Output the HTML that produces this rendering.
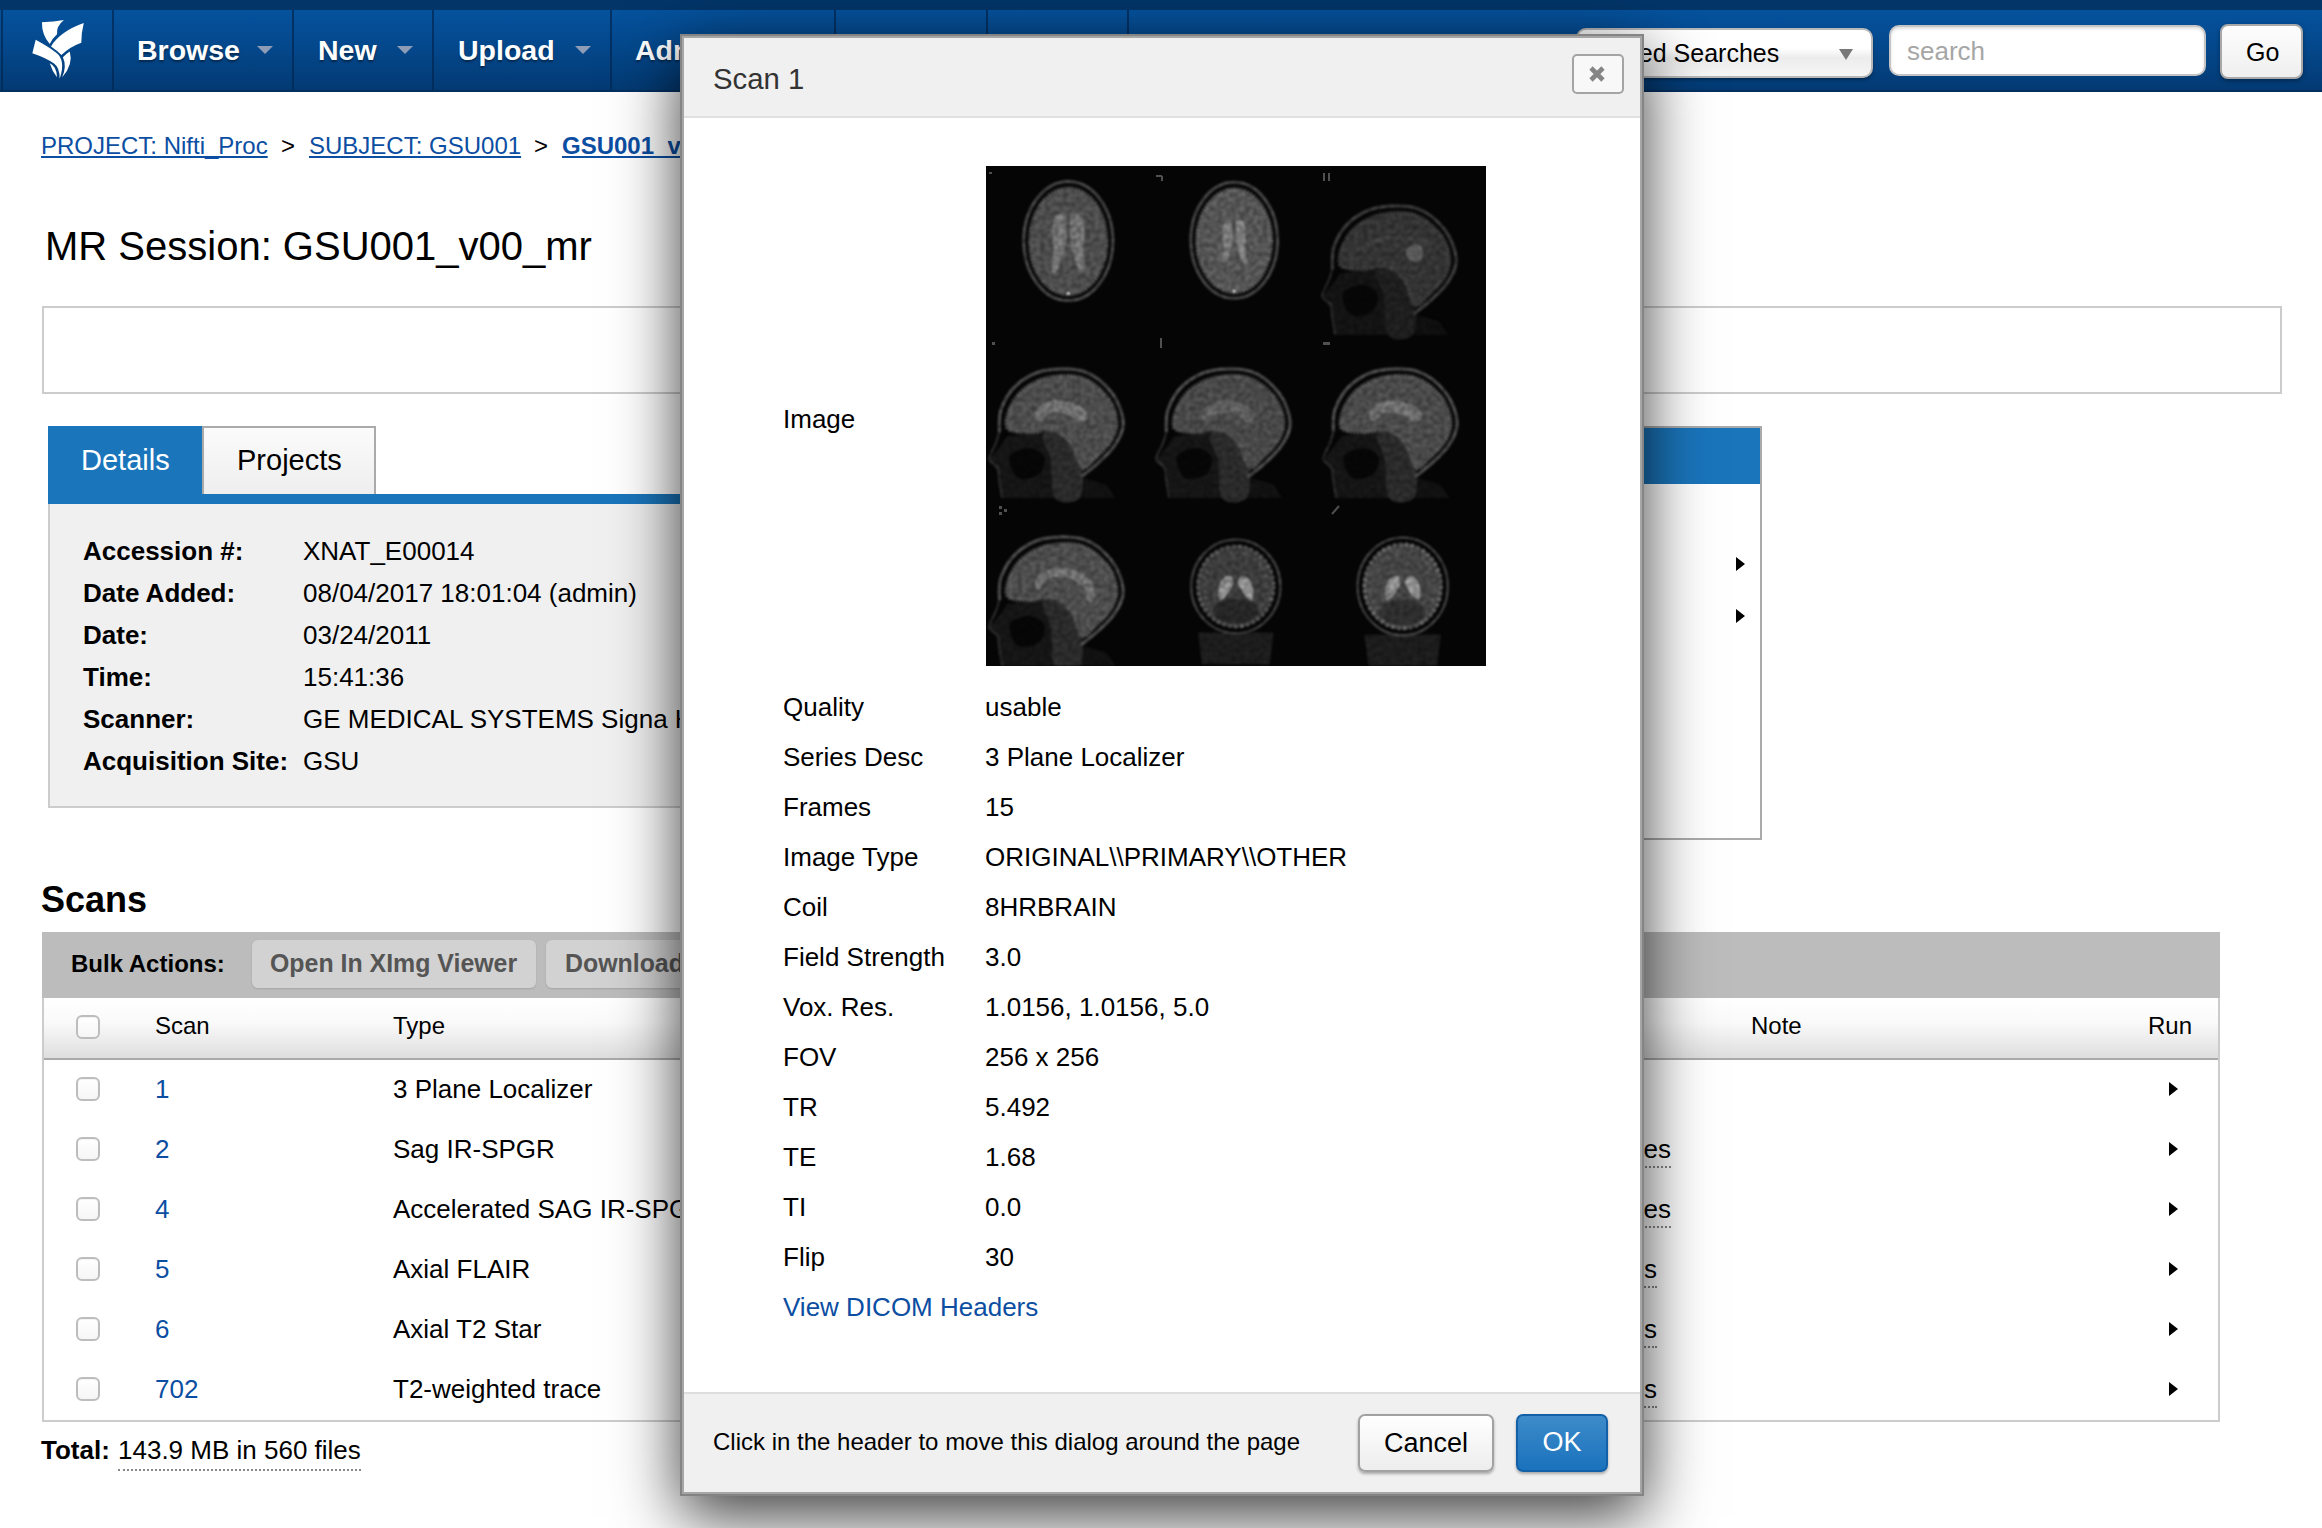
<!DOCTYPE html>
<html><head><meta charset="utf-8"><title>XNAT - MR Session</title>
<style>
*{box-sizing:border-box;margin:0;padding:0}
html,body{width:2322px;height:1528px;overflow:hidden;background:#fff}
body{font-family:"Liberation Sans",sans-serif;font-size:26px;color:#000;position:relative}
.a{position:absolute;white-space:nowrap}
.t{position:absolute;white-space:nowrap;line-height:40px;height:40px;margin-top:-20px}
.b{font-weight:bold}
.lk{color:#0b4ea2}
/* NAV */
#topband{left:0;top:0;width:2322px;height:10px;background:#033569}
#nav{left:0;top:10px;width:2322px;height:82px;background:linear-gradient(#05529d 0,#04488c 45%,#033a73 100%);border-bottom:2px solid #032f5f}
.dv{position:absolute;top:10px;width:2px;height:80px;background:rgba(2,40,84,.75)}
.nt{position:absolute;top:30px;height:40px;line-height:40px;color:#fff;font-weight:bold;font-size:28.5px;text-shadow:0 2px 2px rgba(0,0,0,.4);white-space:nowrap}
.na{position:absolute;top:46px;width:0;height:0;border-left:8px solid transparent;border-right:8px solid transparent;border-top:8px solid #8e9db5}
/* page */
.box{position:absolute;border:2px solid #ccc}
.cb{position:absolute;left:76px;width:24px;height:24px;border:2px solid #bdbdbd;border-radius:6px;background:linear-gradient(#fff,#f6f6f6);box-shadow:inset 0 1px 1px rgba(0,0,0,.05)}
.arr{position:absolute;width:0;height:0;border-top:7.5px solid transparent;border-bottom:7.5px solid transparent;border-left:9.5px solid #000;margin-top:1.5px}
.dot{border-bottom:2px dotted #888;padding-bottom:2px}
/* dialog */
#dlg{left:680px;top:34px;width:964px;height:1462px;background:#fff;border:2px solid #848484;box-shadow:inset 0 0 0 2px #a6a6a6,0 20px 60px rgba(0,0,0,.76)}
</style></head><body>
<!-- NAV -->
<div class="a" id="topband"></div>
<div class="a" id="nav"></div>

<div class="dv" style="left:1px"></div><div class="dv" style="left:112px"></div><div class="dv" style="left:292px"></div><div class="dv" style="left:432px"></div><div class="dv" style="left:610px"></div><div class="dv" style="left:834px"></div><div class="dv" style="left:986px"></div><div class="dv" style="left:1127px"></div>
<svg class="a" style="left:20px;top:12px" width="80" height="76" viewBox="0 0 1608 1528">
<g fill="#fff">
<path d="M440 205 Q680 205 882 163 Q725 290 745 447 Q655 525 598 642 Q440 470 440 205Z"/>
<path d="M1282 223 Q1232 420 1232 617 Q1000 700 832 864 Q740 770 623 692 Q810 390 1282 223Z"/>
<path d="M315 558 Q560 690 722 812 Q928 965 797 1342 Q800 1120 690 1040 Q540 930 248 830Z"/>
<path d="M1000 793 Q1078 1050 848 1314 Q945 1080 862 908 Q920 845 1000 793Z"/>
<path d="M598 1028 Q742 1090 744 1314 Q642 1180 598 1028Z"/>
</g></svg>
<div class="nt" style="left:137px">Browse</div><div class="na" style="left:257px"></div>
<div class="nt" style="left:318px">New</div><div class="na" style="left:397px"></div>
<div class="nt" style="left:458px">Upload</div><div class="na" style="left:575px"></div>
<div class="nt" style="left:635px">Administer</div>
<!-- search -->
<div class="a" style="left:1576px;top:28px;width:297px;height:50px;border:2px solid #b8b8b8;border-radius:10px;background:linear-gradient(#fff 0,#fff 40%,#ececec 60%,#f6f6f6 100%);box-shadow:0 2px 3px rgba(0,0,0,.3)"></div>
<div class="t" style="left:1593px;top:53px;font-size:25px">Stored Searches</div>
<div class="a" style="left:1839px;top:49px;width:0;height:0;border-left:7px solid transparent;border-right:7px solid transparent;border-top:11px solid #777"></div>
<div class="a" style="left:1889px;top:25px;width:317px;height:51px;border:2px solid #c4c4c4;border-radius:10px;background:#fff;box-shadow:inset 0 2px 3px rgba(0,0,0,.12)"></div>
<div class="t" style="left:1907px;top:51px;font-size:26px;color:#a6a6a6">search</div>
<div class="a" style="left:2220px;top:24px;width:83px;height:55px;border:2px solid #a8a8a8;border-radius:8px;background:linear-gradient(#fdfdfd,#efefef);box-shadow:0 2px 4px rgba(0,0,0,.35)"></div>
<div class="t" style="left:2246px;top:52px;font-size:25px">Go</div>


<!-- breadcrumb -->
<div class="t lk" style="left:41px;top:146px;font-size:24px;text-decoration:underline">PROJECT: Nifti_Proc</div>
<div class="t" style="left:281px;top:146px;font-size:24px">&gt;</div>
<div class="t lk" style="left:309px;top:146px;font-size:24px;text-decoration:underline">SUBJECT: GSU001</div>
<div class="t" style="left:534px;top:146px;font-size:24px">&gt;</div>
<div class="t lk b" style="left:562px;top:146px;font-size:24px;text-decoration:underline">GSU001_v00_mr</div>
<div class="t" style="left:45px;top:246px;font-size:40px;line-height:60px;height:60px;margin-top:-30px">MR Session: GSU001_v00_mr</div>
<div class="box" style="left:42px;top:306px;width:2240px;height:88px"></div>
<!-- tabs -->
<div class="a" style="left:48px;top:427px;width:1560px;height:77px;border-bottom:10px solid #1a75bb"></div>
<div class="a" style="left:48px;top:426px;width:154px;height:69px;background:#1a75bb"></div>
<div class="t" style="left:81px;top:460px;font-size:29px;color:#fff">Details</div>
<div class="a" style="left:202px;top:426px;width:174px;height:68px;border:2px solid #aaa;border-bottom:0;background:linear-gradient(#fbfbfb,#eee)"></div>
<div class="t" style="left:237px;top:460px;font-size:29px">Projects</div>
<div class="a" style="left:48px;top:504px;width:1560px;height:304px;background:#f0f0f0;border:2px solid #ccc;border-top:0"></div>
<div class="t b" style="left:83px;top:551px">Accession #:</div><div class="t" style="left:303px;top:551px">XNAT_E00014</div>
<div class="t b" style="left:83px;top:593px">Date Added:</div><div class="t" style="left:303px;top:593px">08/04/2017 18:01:04 (admin)</div>
<div class="t b" style="left:83px;top:635px">Date:</div><div class="t" style="left:303px;top:635px">03/24/2011</div>
<div class="t b" style="left:83px;top:677px">Time:</div><div class="t" style="left:303px;top:677px">15:41:36</div>
<div class="t b" style="left:83px;top:719px">Scanner:</div><div class="t" style="left:303px;top:719px">GE MEDICAL SYSTEMS Signa HDxt</div>
<div class="t b" style="left:83px;top:761px">Acquisition Site:</div><div class="t" style="left:303px;top:761px">GSU</div>
<!-- actions box -->
<div class="a" style="left:1402px;top:426px;width:360px;height:414px;border:2px solid #aaa;background:#fff"></div>
<div class="a" style="left:1404px;top:428px;width:356px;height:56px;background:#1a75bb"></div>
<div class="arr" style="left:1736px;top:555px"></div>
<div class="arr" style="left:1736px;top:607px"></div>
<!-- scans -->
<div class="t b" style="left:41px;top:900px;font-size:36px;line-height:50px;height:50px;margin-top:-25px">Scans</div>
<div class="a" style="left:42px;top:932px;width:2178px;height:66px;background:#bcbcbc"></div>
<div class="t b" style="left:71px;top:964px;font-size:24px">Bulk Actions:</div>
<div class="a" style="left:252px;top:940px;width:284px;height:48px;border-radius:6px;background:#d2d2d2;box-shadow:0 1px 2px rgba(0,0,0,.12)"></div>
<div class="t b" style="left:270px;top:963px;font-size:24.9px;color:#555">Open In XImg Viewer</div>
<div class="a" style="left:546px;top:940px;width:180px;height:48px;border-radius:6px;background:#d2d2d2;box-shadow:0 1px 2px rgba(0,0,0,.12)"></div>
<div class="t b" style="left:565px;top:963px;font-size:24.9px;color:#555">Download</div>
<div class="a" style="left:42px;top:998px;width:2178px;height:424px;border:2px solid #ccc;border-top:0;background:#fff"></div>
<div class="a" style="left:44px;top:998px;width:2174px;height:62px;background:linear-gradient(#fff 0,#fafafa 40%,#dedede 100%);border-bottom:2px solid #aaa"></div>
<div class="cb" style="top:1015px"></div>
<div class="t" style="left:155px;top:1026px;font-size:24px">Scan</div>
<div class="t" style="left:393px;top:1026px;font-size:24px">Type</div>
<div class="t" style="left:1751px;top:1026px;font-size:24px">Note</div>
<div class="t" style="left:2148px;top:1026px;font-size:24px">Run</div>
<div class="cb" style="top:1077px"></div><div class="t lk" style="left:155px;top:1089px">1</div><div class="t" style="left:393px;top:1089px">3 Plane Localizer</div><div class="arr" style="left:2169px;top:1080px"></div>
<div class="cb" style="top:1137px"></div><div class="t lk" style="left:155px;top:1149px">2</div><div class="t" style="left:393px;top:1149px">Sag IR-SPGR</div><div class="arr" style="left:2169px;top:1140px"></div>
<div class="t" style="left:1601px;top:1149px;width:70px;text-align:right"><span class="dot">files</span></div>
<div class="cb" style="top:1197px"></div><div class="t lk" style="left:155px;top:1209px">4</div><div class="t" style="left:393px;top:1209px">Accelerated SAG IR-SPGR</div><div class="arr" style="left:2169px;top:1200px"></div>
<div class="t" style="left:1601px;top:1209px;width:70px;text-align:right"><span class="dot">files</span></div>
<div class="cb" style="top:1257px"></div><div class="t lk" style="left:155px;top:1269px">5</div><div class="t" style="left:393px;top:1269px">Axial FLAIR</div><div class="arr" style="left:2169px;top:1260px"></div>
<div class="t" style="left:1601px;top:1269px;width:56px;text-align:right"><span class="dot">fils</span></div>
<div class="cb" style="top:1317px"></div><div class="t lk" style="left:155px;top:1329px">6</div><div class="t" style="left:393px;top:1329px">Axial T2 Star</div><div class="arr" style="left:2169px;top:1320px"></div>
<div class="t" style="left:1601px;top:1329px;width:56px;text-align:right"><span class="dot">fils</span></div>
<div class="cb" style="top:1377px"></div><div class="t lk" style="left:155px;top:1389px">702</div><div class="t" style="left:393px;top:1389px">T2-weighted trace</div><div class="arr" style="left:2169px;top:1380px"></div>
<div class="t" style="left:1601px;top:1389px;width:56px;text-align:right"><span class="dot">fils</span></div>
<div class="t b" style="left:41px;top:1450px">Total:</div><div class="t" style="left:118px;top:1450px"><span class="dot" style="padding-bottom:4px">143.9 MB in 560 files</span></div>


<div class="a" id="dlg"></div>
<div class="a" style="left:684px;top:38px;width:956px;height:80px;background:#f0f0f0;border-bottom:2px solid #e0e0e0"></div>
<div class="t" style="left:713px;top:79px;font-size:29.3px;color:#333">Scan 1</div>
<div class="a" style="left:1572px;top:54px;width:52px;height:40px;border:2px solid #a4a4a4;border-radius:5px;background:#f8f8f8"></div>
<svg class="a" style="left:1588px;top:65px" width="18" height="18" viewBox="0 0 18 18"><path d="M3 3 L15 15 M15 3 L3 15" stroke="#858585" stroke-width="4.6" fill="none"/></svg>
<div class="t" style="left:783px;top:419px">Image</div>
<!-- MRI-S --><svg class="a" style="left:986px;top:166px" width="500" height="500" viewBox="0 0 500 500">
<defs><filter id="bl" x="0" y="0" filterUnits="userSpaceOnUse" width="500" height="500" color-interpolation-filters="sRGB"><feTurbulence type="fractalNoise" baseFrequency="0.22" numOctaves="2" seed="11" result="n"/><feColorMatrix in="n" type="matrix" values="1.8 0 0 0 -0.4  1.8 0 0 0 -0.4  1.8 0 0 0 -0.4  0 0 0 0 1" result="gn"/><feComposite in="SourceGraphic" in2="gn" operator="arithmetic" k1="0.5" k2="0.75" k3="0" k4="0" result="c"/><feGaussianBlur in="c" stdDeviation="1.2"/></filter>
<filter id="nz" x="0" y="0" width="100%" height="100%"><feTurbulence type="fractalNoise" baseFrequency="0.55" numOctaves="2" seed="7" result="n"/><feColorMatrix in="n" type="matrix" values="0 0 0 0 1  0 0 0 0 1  0 0 0 0 1  1.6 0 0 0 -0.55"/></filter>
<clipPath id="cp"><rect width="500" height="500"/></clipPath></defs>
<rect width="500" height="500" fill="#050505"/>
<g clip-path="url(#cp)"><g filter="url(#bl)">
<ellipse cx="82.3" cy="75" rx="44.599999999999994" ry="59.599999999999994" fill="none" stroke="#464646" stroke-width="3"/>
<ellipse cx="82.3" cy="75.5" rx="38.599999999999994" ry="53.3" fill="#4c4c4c"/>
<ellipse cx="82.3" cy="75.5" rx="38.599999999999994" ry="53.3" fill="none" stroke="#5c5c5c" stroke-width="3.5" stroke-dasharray="2 1.5"/>
<ellipse cx="82.3" cy="75.5" rx="34.8" ry="49.3" fill="none" stroke="#545454" stroke-width="3" stroke-dasharray="1 2.6"/>
<path d="M80.3 49.7 C63.9 40.5 66.2 68.1 67.35 81.9 C67.35 98.0 62.75 106.05 68.5 107.19999999999999 C75.39999999999999 100.3 78.85 84.2 80.3 75 Z" fill="#727272"/>
<path d="M84.3 49.7 C100.69999999999999 40.5 98.39999999999999 68.1 97.25 81.9 C97.25 98.0 101.85 106.05 96.1 107.19999999999999 C89.2 100.3 85.75 84.2 84.3 75 Z" fill="#727272"/>
<circle cx="82.3" cy="127.30000000000001" r="1.6" fill="#ddd"/>
<ellipse cx="248.2" cy="74.3" rx="43.4" ry="58.0" fill="none" stroke="#464646" stroke-width="3"/>
<ellipse cx="248.2" cy="74.8" rx="37.4" ry="51.7" fill="#545454"/>
<ellipse cx="248.2" cy="74.8" rx="37.4" ry="51.7" fill="none" stroke="#646464" stroke-width="3.5" stroke-dasharray="2 1.5"/>
<ellipse cx="248.2" cy="74.8" rx="33.6" ry="47.7" fill="none" stroke="#5c5c5c" stroke-width="3" stroke-dasharray="1 2.6"/>
<path d="M246.2 55.599999999999994 C234.6 48.8 236.29999999999998 69.2 237.14999999999998 79.39999999999999 C237.14999999999998 91.3 233.75 97.25 238.0 98.1 C243.1 93.0 245.64999999999998 81.1 246.2 74.3 Z" fill="#7a7a7a"/>
<path d="M250.2 55.599999999999994 C261.8 48.8 260.09999999999997 69.2 259.25 79.39999999999999 C259.25 91.3 262.65 97.25 258.4 98.1 C253.29999999999998 93.0 250.75 81.1 250.2 74.3 Z" fill="#7a7a7a"/>
<circle cx="248.2" cy="125.0" r="1.6" fill="#ddd"/>
<path d="M336.2 130.2 L345.9 119.0 L354.5 107.1 L397.6 101.7 L401.9 168.9 L348.1 168.9 L345.9 144.8 Z" fill="#131313"/>
<path d="M427.7 148.0 L453.6 155.6 L462.2 168.9 L425.6 168.9 Z" fill="#0f0f0f"/>
<path d="M346.4 102.8 C345.7 104.8 344.4 110.1 342.7 114.7 C341.0 119.2 335.9 126.2 336.2 130.2 C336.6 134.1 343.2 135.2 344.8 138.4 C346.5 141.5 345.2 144.0 345.9 149.1 C346.6 154.2 348.6 165.6 349.1 168.9" fill="none" stroke="#292929" stroke-width="2.2"/>
<path d="M356.7 127.6 C358.5 122.6 370.3 119.0 376.1 119.0 C381.8 119.0 389.3 123.3 391.1 127.6 C392.9 131.9 391.1 141.2 386.8 144.8 C382.5 148.4 370.3 152.0 365.3 149.1 C360.3 146.2 354.9 132.6 356.7 127.6 Z" fill="#060606"/>
<path d="M398.7 100.0 C403.4 101.1 413.0 108.5 418.1 114.7 C423.1 120.9 427.4 128.2 428.8 137.3 C430.3 146.3 431.2 163.7 426.7 168.9 C422.2 174.2 406.8 175.5 401.9 168.9 C397.1 162.4 399.7 139.9 397.6 129.7 C395.5 119.6 389.2 113.2 389.4 108.2 C389.6 103.3 393.9 98.9 398.7 100.0 Z" fill="#1e1e1e"/>
<path d="M346.4 102.8 C346.6 99.1 345.3 87.9 348.1 80.2 C350.9 72.5 356.1 62.9 363.1 56.5 C370.1 50.1 378.8 44.2 390.1 41.9 C401.4 39.6 419.5 38.8 431.0 42.5 C442.5 46.2 452.4 55.6 459.0 64.1 C465.5 72.5 469.6 84.5 470.2 93.1 C470.7 101.7 466.4 108.9 462.2 115.7 C458.0 122.6 450.7 128.7 445.0 134.0 C439.2 139.4 430.6 145.7 427.7 148.0" fill="none" stroke="#3a3a3a" stroke-width="3.2"/>
<path d="M354.5 99.2 C351.3 94.9 354.5 84.4 357.5 77.6 C360.6 70.9 366.0 63.6 372.6 58.7 C379.2 53.7 387.7 49.6 397.2 47.9 C406.6 46.3 419.9 45.3 429.5 48.8 C439.1 52.2 449.1 61.2 454.9 68.6 C460.6 76.0 463.4 85.8 463.9 93.1 C464.4 100.5 461.4 106.6 457.9 112.5 C454.4 118.5 447.6 124.5 442.8 128.9 C438.0 133.3 433.4 141.2 429.3 138.8 C425.1 136.4 423.0 121.0 418.1 114.7 C413.1 108.3 406.6 102.8 399.8 100.9 C392.9 99.0 384.7 103.8 377.1 103.5 C369.6 103.2 357.8 103.5 354.5 99.2 Z" fill="#333333"/>
<path d="M354.5 99.2 C351.3 94.9 354.5 84.4 357.5 77.6 C360.6 70.9 366.0 63.6 372.6 58.7 C379.2 53.7 387.7 49.6 397.2 47.9 C406.6 46.3 419.9 45.3 429.5 48.8 C439.1 52.2 449.1 61.2 454.9 68.6 C460.6 76.0 463.4 85.8 463.9 93.1 C464.4 100.5 461.4 106.6 457.9 112.5 C454.4 118.5 447.6 124.5 442.8 128.9 C438.0 133.3 433.4 141.2 429.3 138.8 C425.1 136.4 423.0 121.0 418.1 114.7 C413.1 108.3 406.6 102.8 399.8 100.9 C392.9 99.0 384.7 103.8 377.1 103.5 C369.6 103.2 357.8 103.5 354.5 99.2 Z" fill="none" stroke="#434343" stroke-width="3.5" stroke-dasharray="2 1.5"/>
<ellipse cx="429" cy="87" rx="9" ry="9" fill="#585858"/>
<path d="M372 84 C388 70 420 68 446 78" fill="none" stroke="#3c3c3c" stroke-width="5"/>
<path d="M3.2 293.2 L12.9 282.0 L21.5 270.1 L64.6 264.7 L68.9 331.9 L15.1 331.9 L12.9 307.8 Z" fill="#151515"/>
<path d="M94.7 311.0 L120.6 318.6 L129.2 331.9 L92.6 331.9 Z" fill="#111111"/>
<path d="M13.4 265.8 C12.7 267.8 11.4 273.1 9.7 277.7 C8.0 282.2 2.9 289.2 3.2 293.2 C3.6 297.1 10.2 298.2 11.8 301.4 C13.5 304.5 12.2 307.0 12.9 312.1 C13.6 317.2 15.6 328.6 16.1 331.9" fill="none" stroke="#2b2b2b" stroke-width="2.2"/>
<path d="M23.7 290.6 C25.5 285.6 37.3 282.0 43.1 282.0 C48.8 282.0 56.3 286.3 58.1 290.6 C59.9 294.9 58.1 304.2 53.8 307.8 C49.5 311.4 37.3 315.0 32.3 312.1 C27.3 309.2 21.9 295.6 23.7 290.6 Z" fill="#060606"/>
<path d="M65.7 263.0 C70.4 264.1 80.0 271.5 85.1 277.7 C90.1 283.9 94.4 291.2 95.8 300.3 C97.3 309.3 98.2 326.7 93.7 331.9 C89.2 337.2 73.8 338.5 68.9 331.9 C64.1 325.4 66.7 302.9 64.6 292.7 C62.5 282.6 56.2 276.2 56.4 271.2 C56.6 266.3 60.9 261.9 65.7 263.0 Z" fill="#2a2a2a"/>
<path d="M13.4 265.8 C13.6 262.1 12.3 250.9 15.1 243.2 C17.9 235.5 23.1 225.9 30.1 219.5 C37.1 213.1 45.8 207.2 57.1 204.9 C68.4 202.6 86.5 201.8 98.0 205.5 C109.5 209.2 119.4 218.6 126.0 227.1 C132.5 235.5 136.6 247.5 137.2 256.1 C137.7 264.7 133.4 271.9 129.2 278.7 C125.0 285.6 117.7 291.7 112.0 297.0 C106.2 302.4 97.6 308.7 94.7 311.0" fill="none" stroke="#4a4a4a" stroke-width="3.2"/>
<path d="M21.5 262.2 C18.3 257.9 21.5 247.4 24.5 240.6 C27.6 233.9 33.0 226.6 39.6 221.7 C46.2 216.7 54.7 212.6 64.2 210.9 C73.6 209.3 86.9 208.3 96.5 211.8 C106.1 215.2 116.1 224.2 121.9 231.6 C127.6 239.0 130.4 248.8 130.9 256.1 C131.4 263.5 128.4 269.6 124.9 275.5 C121.4 281.5 114.6 287.5 109.8 291.9 C105.0 296.3 100.4 304.2 96.3 301.8 C92.1 299.4 90.0 284.0 85.1 277.7 C80.1 271.3 73.6 265.8 66.8 263.9 C59.9 262.0 51.7 266.8 44.1 266.5 C36.6 266.2 24.8 266.5 21.5 262.2 Z" fill="#4c4c4c"/>
<path d="M21.5 262.2 C18.3 257.9 21.5 247.4 24.5 240.6 C27.6 233.9 33.0 226.6 39.6 221.7 C46.2 216.7 54.7 212.6 64.2 210.9 C73.6 209.3 86.9 208.3 96.5 211.8 C106.1 215.2 116.1 224.2 121.9 231.6 C127.6 239.0 130.4 248.8 130.9 256.1 C131.4 263.5 128.4 269.6 124.9 275.5 C121.4 281.5 114.6 287.5 109.8 291.9 C105.0 296.3 100.4 304.2 96.3 301.8 C92.1 299.4 90.0 284.0 85.1 277.7 C80.1 271.3 73.6 265.8 66.8 263.9 C59.9 262.0 51.7 266.8 44.1 266.5 C36.6 266.2 24.8 266.5 21.5 262.2 Z" fill="none" stroke="#5c5c5c" stroke-width="3.5" stroke-dasharray="2 1.5"/>
<path d="M49.1 250.1 C49.3 247.3 51.5 241.1 55.6 238.5 C59.6 235.8 66.7 233.8 73.2 234.2 C79.7 234.5 89.9 238.0 94.7 240.6 C99.6 243.3 102.1 247.4 102.1 250.1 C102.1 252.8 97.9 256.7 94.7 256.6 C91.6 256.4 87.9 250.8 82.9 249.2 C77.9 247.7 69.4 246.1 64.6 247.1 C59.8 248.1 56.8 254.8 54.3 255.3 C51.7 255.8 48.9 252.9 49.1 250.1 Z" fill="#6e6e6e"/>
<path d="M170.2 293.2 L179.9 282.0 L188.5 270.1 L231.6 264.7 L235.9 331.9 L182.1 331.9 L179.9 307.8 Z" fill="#151515"/>
<path d="M261.7 311.0 L287.6 318.6 L296.2 331.9 L259.6 331.9 Z" fill="#111111"/>
<path d="M180.4 265.8 C179.7 267.8 178.4 273.1 176.7 277.7 C175.0 282.2 169.9 289.2 170.2 293.2 C170.6 297.1 177.2 298.2 178.8 301.4 C180.5 304.5 179.2 307.0 179.9 312.1 C180.6 317.2 182.6 328.6 183.1 331.9" fill="none" stroke="#2b2b2b" stroke-width="2.2"/>
<path d="M190.7 290.6 C192.5 285.6 204.3 282.0 210.1 282.0 C215.8 282.0 223.3 286.3 225.1 290.6 C226.9 294.9 225.1 304.2 220.8 307.8 C216.5 311.4 204.3 315.0 199.3 312.1 C194.3 309.2 188.9 295.6 190.7 290.6 Z" fill="#060606"/>
<path d="M232.7 263.0 C237.4 264.1 247.0 271.5 252.1 277.7 C257.1 283.9 261.4 291.2 262.8 300.3 C264.3 309.3 265.2 326.7 260.7 331.9 C256.2 337.2 240.8 338.5 235.9 331.9 C231.1 325.4 233.7 302.9 231.6 292.7 C229.5 282.6 223.2 276.2 223.4 271.2 C223.6 266.3 227.9 261.9 232.7 263.0 Z" fill="#2a2a2a"/>
<path d="M180.4 265.8 C180.6 262.1 179.3 250.9 182.1 243.2 C184.9 235.5 190.1 225.9 197.1 219.5 C204.1 213.1 212.8 207.2 224.1 204.9 C235.4 202.6 253.5 201.8 265.0 205.5 C276.5 209.2 286.4 218.6 293.0 227.1 C299.5 235.5 303.6 247.5 304.2 256.1 C304.7 264.7 300.4 271.9 296.2 278.7 C292.0 285.6 284.7 291.7 279.0 297.0 C273.2 302.4 264.6 308.7 261.7 311.0" fill="none" stroke="#4a4a4a" stroke-width="3.2"/>
<path d="M188.5 262.2 C185.3 257.9 188.5 247.4 191.5 240.6 C194.6 233.9 200.0 226.6 206.6 221.7 C213.2 216.7 221.7 212.6 231.2 210.9 C240.6 209.3 253.9 208.3 263.5 211.8 C273.1 215.2 283.1 224.2 288.9 231.6 C294.6 239.0 297.4 248.8 297.9 256.1 C298.4 263.5 295.4 269.6 291.9 275.5 C288.4 281.5 281.6 287.5 276.8 291.9 C272.0 296.3 267.4 304.2 263.3 301.8 C259.1 299.4 257.0 284.0 252.1 277.7 C247.1 271.3 240.6 265.8 233.8 263.9 C226.9 262.0 218.7 266.8 211.1 266.5 C203.6 266.2 191.8 266.5 188.5 262.2 Z" fill="#484848"/>
<path d="M188.5 262.2 C185.3 257.9 188.5 247.4 191.5 240.6 C194.6 233.9 200.0 226.6 206.6 221.7 C213.2 216.7 221.7 212.6 231.2 210.9 C240.6 209.3 253.9 208.3 263.5 211.8 C273.1 215.2 283.1 224.2 288.9 231.6 C294.6 239.0 297.4 248.8 297.9 256.1 C298.4 263.5 295.4 269.6 291.9 275.5 C288.4 281.5 281.6 287.5 276.8 291.9 C272.0 296.3 267.4 304.2 263.3 301.8 C259.1 299.4 257.0 284.0 252.1 277.7 C247.1 271.3 240.6 265.8 233.8 263.9 C226.9 262.0 218.7 266.8 211.1 266.5 C203.6 266.2 191.8 266.5 188.5 262.2 Z" fill="none" stroke="#585858" stroke-width="3.5" stroke-dasharray="2 1.5"/>
<path d="M216.1 250.1 C216.3 247.3 218.5 241.1 222.6 238.5 C226.6 235.8 233.7 233.8 240.2 234.2 C246.7 234.5 256.9 238.0 261.7 240.6 C266.6 243.3 269.1 247.4 269.1 250.1 C269.1 252.8 264.9 256.7 261.7 256.6 C258.6 256.4 254.9 250.8 249.9 249.2 C244.9 247.7 236.4 246.1 231.6 247.1 C226.8 248.1 223.8 254.8 221.3 255.3 C218.7 255.8 215.9 252.9 216.1 250.1 Z" fill="#5f5f5f"/>
<path d="M337.2 293.2 L346.9 282.0 L355.5 270.1 L398.6 264.7 L402.9 331.9 L349.1 331.9 L346.9 307.8 Z" fill="#151515"/>
<path d="M428.7 311.0 L454.6 318.6 L463.2 331.9 L426.6 331.9 Z" fill="#111111"/>
<path d="M347.4 265.8 C346.7 267.8 345.4 273.1 343.7 277.7 C342.0 282.2 336.9 289.2 337.2 293.2 C337.6 297.1 344.2 298.2 345.8 301.4 C347.5 304.5 346.2 307.0 346.9 312.1 C347.6 317.2 349.6 328.6 350.1 331.9" fill="none" stroke="#2b2b2b" stroke-width="2.2"/>
<path d="M357.7 290.6 C359.5 285.6 371.3 282.0 377.1 282.0 C382.8 282.0 390.3 286.3 392.1 290.6 C393.9 294.9 392.1 304.2 387.8 307.8 C383.5 311.4 371.3 315.0 366.3 312.1 C361.3 309.2 355.9 295.6 357.7 290.6 Z" fill="#060606"/>
<path d="M399.7 263.0 C404.4 264.1 414.0 271.5 419.1 277.7 C424.1 283.9 428.4 291.2 429.8 300.3 C431.3 309.3 432.2 326.7 427.7 331.9 C423.2 337.2 407.8 338.5 402.9 331.9 C398.1 325.4 400.7 302.9 398.6 292.7 C396.5 282.6 390.2 276.2 390.4 271.2 C390.6 266.3 394.9 261.9 399.7 263.0 Z" fill="#2a2a2a"/>
<path d="M347.4 265.8 C347.6 262.1 346.3 250.9 349.1 243.2 C351.9 235.5 357.1 225.9 364.1 219.5 C371.1 213.1 379.8 207.2 391.1 204.9 C402.4 202.6 420.5 201.8 432.0 205.5 C443.5 209.2 453.4 218.6 460.0 227.1 C466.5 235.5 470.6 247.5 471.2 256.1 C471.7 264.7 467.4 271.9 463.2 278.7 C459.0 285.6 451.7 291.7 446.0 297.0 C440.2 302.4 431.6 308.7 428.7 311.0" fill="none" stroke="#4a4a4a" stroke-width="3.2"/>
<path d="M355.5 262.2 C352.3 257.9 355.5 247.4 358.5 240.6 C361.6 233.9 367.0 226.6 373.6 221.7 C380.2 216.7 388.7 212.6 398.2 210.9 C407.6 209.3 420.9 208.3 430.5 211.8 C440.1 215.2 450.1 224.2 455.9 231.6 C461.6 239.0 464.4 248.8 464.9 256.1 C465.4 263.5 462.4 269.6 458.9 275.5 C455.4 281.5 448.6 287.5 443.8 291.9 C439.0 296.3 434.4 304.2 430.3 301.8 C426.1 299.4 424.0 284.0 419.1 277.7 C414.1 271.3 407.6 265.8 400.8 263.9 C393.9 262.0 385.7 266.8 378.1 266.5 C370.6 266.2 358.8 266.5 355.5 262.2 Z" fill="#4a4a4a"/>
<path d="M355.5 262.2 C352.3 257.9 355.5 247.4 358.5 240.6 C361.6 233.9 367.0 226.6 373.6 221.7 C380.2 216.7 388.7 212.6 398.2 210.9 C407.6 209.3 420.9 208.3 430.5 211.8 C440.1 215.2 450.1 224.2 455.9 231.6 C461.6 239.0 464.4 248.8 464.9 256.1 C465.4 263.5 462.4 269.6 458.9 275.5 C455.4 281.5 448.6 287.5 443.8 291.9 C439.0 296.3 434.4 304.2 430.3 301.8 C426.1 299.4 424.0 284.0 419.1 277.7 C414.1 271.3 407.6 265.8 400.8 263.9 C393.9 262.0 385.7 266.8 378.1 266.5 C370.6 266.2 358.8 266.5 355.5 262.2 Z" fill="none" stroke="#5a5a5a" stroke-width="3.5" stroke-dasharray="2 1.5"/>
<path d="M383.1 250.1 C383.3 247.3 385.5 241.1 389.6 238.5 C393.6 235.8 400.7 233.8 407.2 234.2 C413.7 234.5 423.9 238.0 428.7 240.6 C433.6 243.3 436.1 247.4 436.1 250.1 C436.1 252.8 431.9 256.7 428.7 256.6 C425.6 256.4 421.9 250.8 416.9 249.2 C411.9 247.7 403.4 246.1 398.6 247.1 C393.8 248.1 390.8 254.8 388.3 255.3 C385.7 255.8 382.9 252.9 383.1 250.1 Z" fill="#6c6c6c"/>
<path d="M3.2 461.2 L12.9 450.0 L21.5 438.1 L64.6 432.7 L68.9 499.9 L15.1 499.9 L12.9 475.8 Z" fill="#151515"/>
<path d="M94.7 479.0 L120.6 486.6 L129.2 499.9 L92.6 499.9 Z" fill="#111111"/>
<path d="M13.4 433.8 C12.7 435.8 11.4 441.1 9.7 445.7 C8.0 450.2 2.9 457.2 3.2 461.2 C3.6 465.1 10.2 466.2 11.8 469.4 C13.5 472.5 12.2 475.0 12.9 480.1 C13.6 485.2 15.6 496.6 16.1 499.9" fill="none" stroke="#2b2b2b" stroke-width="2.2"/>
<path d="M23.7 458.6 C25.5 453.6 37.3 450.0 43.1 450.0 C48.8 450.0 56.3 454.3 58.1 458.6 C59.9 462.9 58.1 472.2 53.8 475.8 C49.5 479.4 37.3 483.0 32.3 480.1 C27.3 477.2 21.9 463.6 23.7 458.6 Z" fill="#060606"/>
<path d="M65.7 431.0 C70.4 432.1 80.0 439.5 85.1 445.7 C90.1 451.9 94.4 459.2 95.8 468.3 C97.3 477.3 98.2 494.7 93.7 499.9 C89.2 505.2 73.8 506.5 68.9 499.9 C64.1 493.4 66.7 470.9 64.6 460.7 C62.5 450.6 56.2 444.2 56.4 439.2 C56.6 434.3 60.9 429.9 65.7 431.0 Z" fill="#2a2a2a"/>
<path d="M13.4 433.8 C13.6 430.1 12.3 418.9 15.1 411.2 C17.9 403.5 23.1 393.9 30.1 387.5 C37.1 381.1 45.8 375.2 57.1 372.9 C68.4 370.6 86.5 369.8 98.0 373.5 C109.5 377.2 119.4 386.6 126.0 395.1 C132.5 403.5 136.6 415.5 137.2 424.1 C137.7 432.7 133.4 439.9 129.2 446.7 C125.0 453.6 117.7 459.7 112.0 465.0 C106.2 470.4 97.6 476.7 94.7 479.0" fill="none" stroke="#4a4a4a" stroke-width="3.2"/>
<path d="M21.5 430.2 C18.3 425.9 21.5 415.4 24.5 408.6 C27.6 401.9 33.0 394.6 39.6 389.7 C46.2 384.7 54.7 380.6 64.2 378.9 C73.6 377.3 86.9 376.3 96.5 379.8 C106.1 383.2 116.1 392.2 121.9 399.6 C127.6 407.0 130.4 416.8 130.9 424.1 C131.4 431.5 128.4 437.6 124.9 443.5 C121.4 449.5 114.6 455.5 109.8 459.9 C105.0 464.3 100.4 472.2 96.3 469.8 C92.1 467.4 90.0 452.0 85.1 445.7 C80.1 439.3 73.6 433.8 66.8 431.9 C59.9 430.0 51.7 434.8 44.1 434.5 C36.6 434.2 24.8 434.5 21.5 430.2 Z" fill="#4c4c4c"/>
<path d="M21.5 430.2 C18.3 425.9 21.5 415.4 24.5 408.6 C27.6 401.9 33.0 394.6 39.6 389.7 C46.2 384.7 54.7 380.6 64.2 378.9 C73.6 377.3 86.9 376.3 96.5 379.8 C106.1 383.2 116.1 392.2 121.9 399.6 C127.6 407.0 130.4 416.8 130.9 424.1 C131.4 431.5 128.4 437.6 124.9 443.5 C121.4 449.5 114.6 455.5 109.8 459.9 C105.0 464.3 100.4 472.2 96.3 469.8 C92.1 467.4 90.0 452.0 85.1 445.7 C80.1 439.3 73.6 433.8 66.8 431.9 C59.9 430.0 51.7 434.8 44.1 434.5 C36.6 434.2 24.8 434.5 21.5 430.2 Z" fill="none" stroke="#5c5c5c" stroke-width="3.5" stroke-dasharray="2 1.5"/>
<path d="M49.1 418.1 C49.4 415.2 51.5 409.2 55.6 406.5 C59.6 403.7 66.7 401.7 73.2 401.7 C79.7 401.7 89.2 403.7 94.7 406.5 C100.3 409.2 104.4 413.7 106.6 418.1 C108.8 422.5 108.9 429.9 108.1 432.7 C107.3 435.6 103.3 437.1 101.6 435.3 C99.9 433.6 100.6 426.1 98.0 422.4 C95.4 418.7 90.6 414.9 86.1 412.9 C81.6 411.0 75.7 410.4 71.1 410.8 C66.4 411.1 61.0 412.9 58.1 415.1 C55.3 417.2 55.3 423.2 53.8 423.7 C52.3 424.2 48.8 421.0 49.1 418.1 Z" fill="#6e6e6e"/>
<path d="M212.0 466.4 L216.0 498.4 L283.6 498.4 L287.6 466.4 Z" fill="#1c1c1c"/>
<ellipse cx="249.8" cy="420.4" rx="44.599999999999994" ry="46.8" fill="none" stroke="#404040" stroke-width="2.4"/>
<ellipse cx="249.8" cy="420.4" rx="39.3" ry="41.5" fill="#3c3c3c"/>
<ellipse cx="249.8" cy="420.4" rx="37.8" ry="40" fill="none" stroke="#646464" stroke-width="4" stroke-dasharray="2 4"/>
<ellipse cx="249.8" cy="420.4" rx="31.799999999999997" ry="34" fill="none" stroke="#505050" stroke-width="3" stroke-dasharray="1.5 5"/>
<path d="M245.8 410.4 C233.8 406.4 229.8 426.4 233.8 434.4 C239.8 432.4 245.8 422.4 247.8 416.4 Z" fill="#8c8c8c"/>
<path d="M253.8 410.4 C265.8 406.4 269.8 426.4 265.8 434.4 C259.8 432.4 253.8 422.4 251.8 416.4 Z" fill="#8c8c8c"/>
<ellipse cx="249.8" cy="445.35999999999996" rx="22.9" ry="12.48" fill="#262626"/>
<path d="M378.4 468.4 L382.4 500.4 L451.0 500.4 L455.0 468.4 Z" fill="#1c1c1c"/>
<ellipse cx="416.7" cy="420.4" rx="45.099999999999994" ry="48.8" fill="none" stroke="#404040" stroke-width="2.4"/>
<ellipse cx="416.7" cy="420.4" rx="39.8" ry="43.5" fill="#444444"/>
<ellipse cx="416.7" cy="420.4" rx="38.3" ry="42" fill="none" stroke="#6c6c6c" stroke-width="4" stroke-dasharray="2 4"/>
<ellipse cx="416.7" cy="420.4" rx="32.3" ry="36" fill="none" stroke="#585858" stroke-width="3" stroke-dasharray="1.5 5"/>
<path d="M412.7 410.4 C400.7 406.4 396.7 426.4 400.7 434.4 C406.7 432.4 412.7 422.4 414.7 416.4 Z" fill="#8c8c8c"/>
<path d="M420.7 410.4 C432.7 406.4 436.7 426.4 432.7 434.4 C426.7 432.4 420.7 422.4 418.7 416.4 Z" fill="#8c8c8c"/>
<ellipse cx="416.7" cy="446.4" rx="23.15" ry="13.0" fill="#2e2e2e"/>
</g>
<g fill="#505050"><rect x="3" y="6" width="3" height="2"/><rect x="170" y="9" width="6" height="2"/><rect x="175" y="10" width="2" height="5"/><rect x="337" y="7" width="2" height="8"/><rect x="342" y="7" width="2" height="8"/><rect x="6" y="176" width="3" height="3"/><rect x="174" y="172" width="2" height="10"/><rect x="337" y="176" width="7" height="3"/><rect x="13" y="340" width="3" height="3"/><rect x="18" y="343" width="3" height="3"/><rect x="13" y="346" width="3" height="3"/><path d="M346 348 L353 340" stroke="#505050" stroke-width="2"/></g></g>
</svg><!-- MRI-E -->
<div class="a" style="left:684px;top:1392px;width:956px;height:100px;background:#f0f0f0;border-top:2px solid #dedede"></div>
<div class="t" style="left:713px;top:1442px;font-size:24px">Click in the header to move this dialog around the page</div>
<div class="a" style="left:1358px;top:1414px;width:136px;height:58px;border:2px solid #a2a2a2;border-radius:7px;background:linear-gradient(#fff,#ededed);box-shadow:0 2px 3px rgba(0,0,0,.3)"></div>
<div class="t" style="left:1358px;top:1443px;width:136px;text-align:center;font-size:27px">Cancel</div>
<div class="a" style="left:1516px;top:1414px;width:92px;height:58px;border:2px solid #1260a8;border-radius:7px;background:linear-gradient(#3d8bc9,#1a72bd);box-shadow:0 2px 3px rgba(0,0,0,.3)"></div>
<div class="t" style="left:1516px;top:1442px;width:92px;text-align:center;font-size:27px;color:#fff">OK</div>
<div class="t" style="left:783px;top:707px">Quality</div><div class="t" style="left:985px;top:707px">usable</div>
<div class="t" style="left:783px;top:757px">Series Desc</div><div class="t" style="left:985px;top:757px">3 Plane Localizer</div>
<div class="t" style="left:783px;top:807px">Frames</div><div class="t" style="left:985px;top:807px">15</div>
<div class="t" style="left:783px;top:857px">Image Type</div><div class="t" style="left:985px;top:857px">ORIGINAL\\PRIMARY\\OTHER</div>
<div class="t" style="left:783px;top:907px">Coil</div><div class="t" style="left:985px;top:907px">8HRBRAIN</div>
<div class="t" style="left:783px;top:957px">Field Strength</div><div class="t" style="left:985px;top:957px">3.0</div>
<div class="t" style="left:783px;top:1007px">Vox. Res.</div><div class="t" style="left:985px;top:1007px">1.0156, 1.0156, 5.0</div>
<div class="t" style="left:783px;top:1057px">FOV</div><div class="t" style="left:985px;top:1057px">256 x 256</div>
<div class="t" style="left:783px;top:1107px">TR</div><div class="t" style="left:985px;top:1107px">5.492</div>
<div class="t" style="left:783px;top:1157px">TE</div><div class="t" style="left:985px;top:1157px">1.68</div>
<div class="t" style="left:783px;top:1207px">TI</div><div class="t" style="left:985px;top:1207px">0.0</div>
<div class="t" style="left:783px;top:1257px">Flip</div><div class="t" style="left:985px;top:1257px">30</div>
<div class="t lk" style="left:783px;top:1307px">View DICOM Headers</div>

</body></html>
